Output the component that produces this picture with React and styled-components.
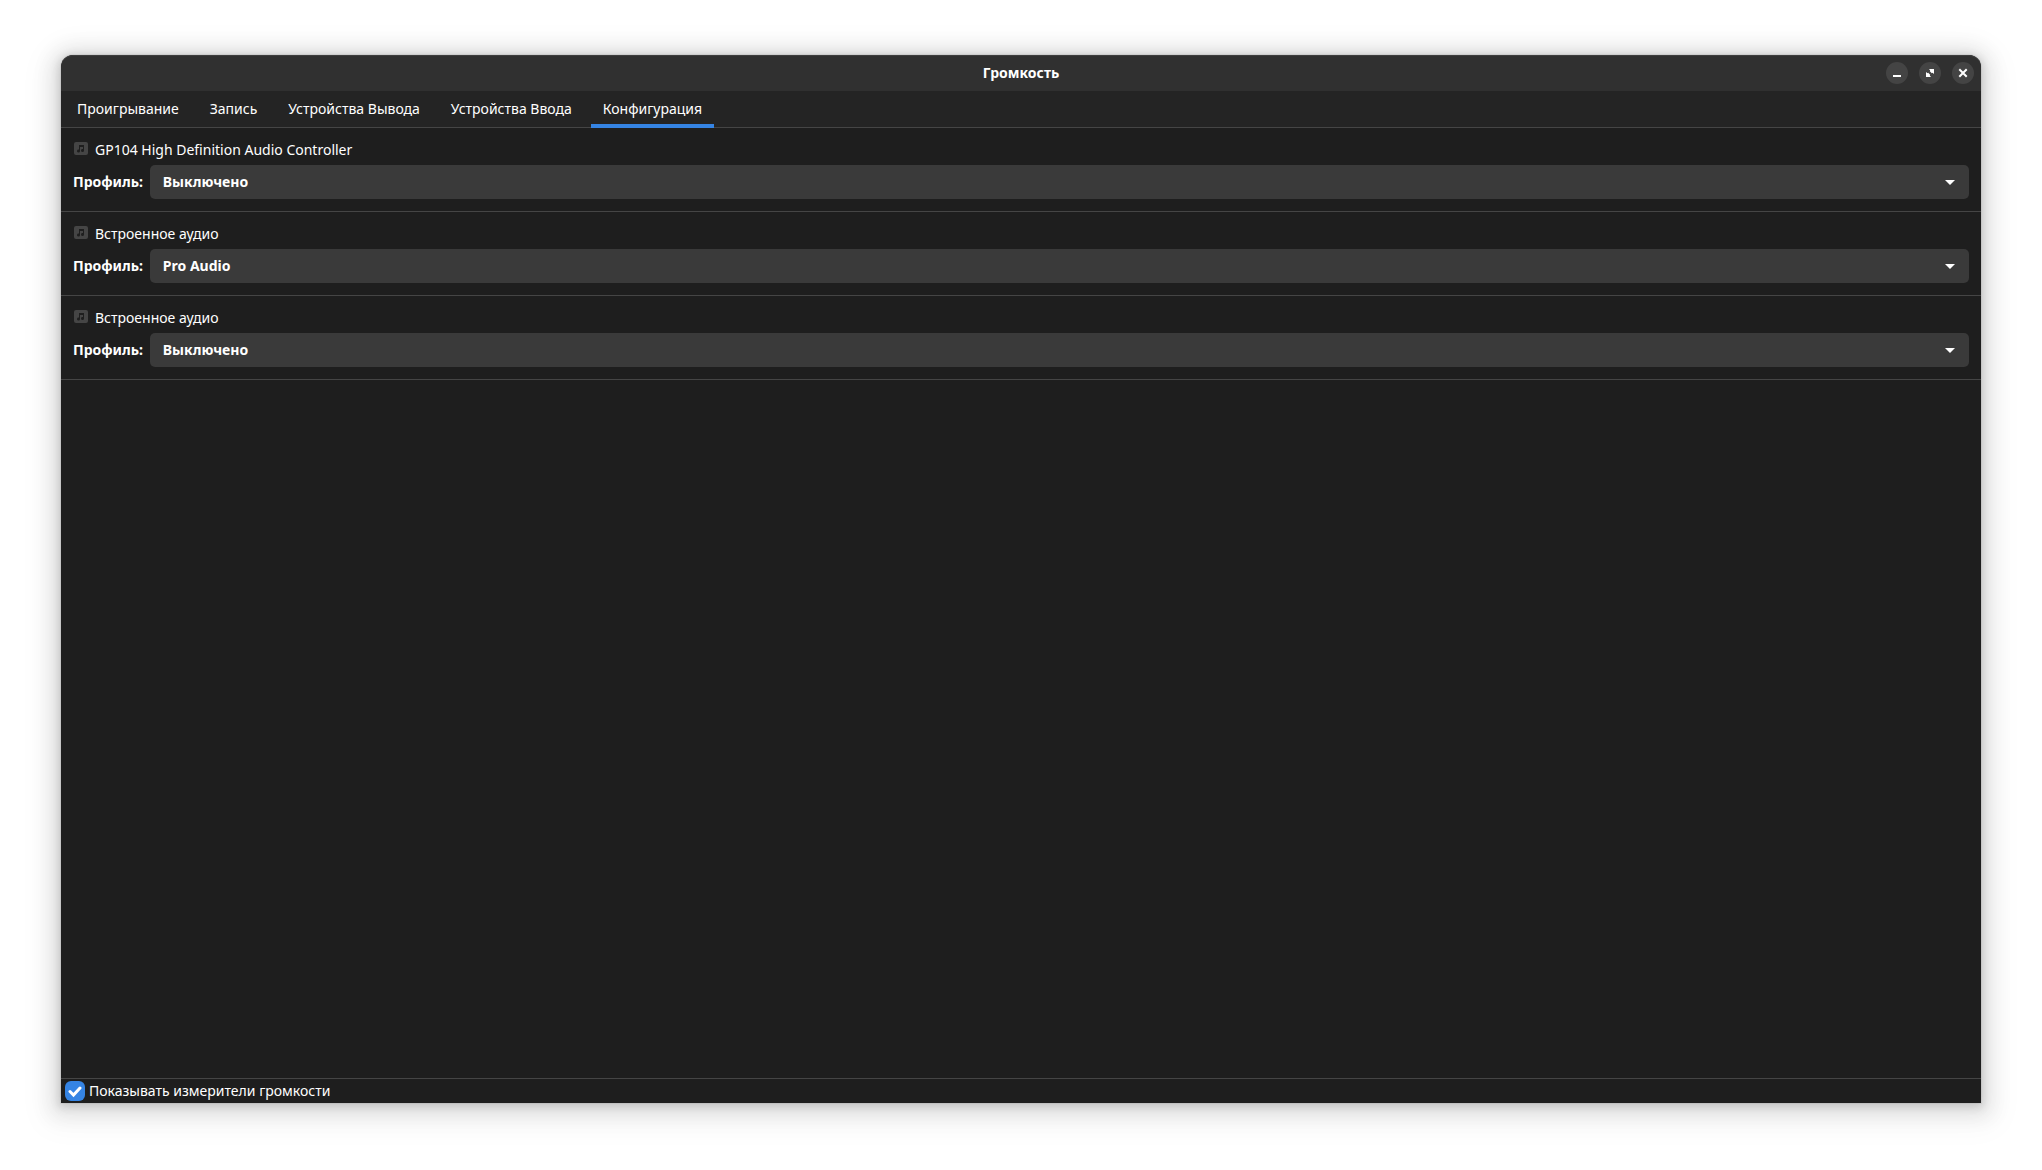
import styled, { createGlobalStyle } from "styled-components";
import { useState } from "react";

const GlobalStyle = createGlobalStyle`
    *{
        box-sizing: border-box;
    }
    body{
        margin: 0;
        background-color: white;
    }
    body, button, select, input{
        font-family: "Noto Sans", "Open Sans", sans-serif;
        font-size: 14px;
        line-height: 20px;
    }
`
const Desktop = styled.div`
    min-height: 100vh;
    display: flex;
    padding: 55px 61px 67px;
`
const Window = styled.main`
    flex: 1;
    display: flex;
    flex-direction: column;
    min-width: 0;
    color: white;
    background-color: #1e1e1e;
    border-radius: 12px 12px 0 0;
    box-shadow: 0 2px 8px 2px rgba(0,0,0,0.13), 0 3px 20px 10px rgba(0,0,0,0.09),
        0 6px 32px 16px rgba(0,0,0,0.04), 0 0 0 1px rgba(0,0,0,0.05);
`
const TitleBar = styled.header`
    height: 36px;
    display: grid;
    grid-template-columns: 1fr auto 1fr;
    align-items: center;
    padding: 0 7px;
    background-color: #303030;
    border-radius: 12px 12px 0 0;
    box-shadow: inset 0 1px rgba(255,255,255,0.07);
`
const Title = styled.h1`
    grid-column: 2;
    margin: 0;
    font-size: 14px;
    font-weight: 700;
`
const WindowButtons = styled.div`
    display: flex;
    justify-content: flex-end;
    gap: 11px;
`
const WindowButton = styled.button`
    width: 22px;
    height: 22px;
    padding: 0;
    border: none;
    border-radius: 50%;
    display: flex;
    align-items: center;
    justify-content: center;
    color: white;
    background-color: #444444;

    &:hover{
        background-color: #4f4f4f;
    }
`
const Tabs = styled.nav`
    height: 37px;
    display: flex;
    gap: 7px;
    padding: 0 4px;
    background-color: #242424;
    border-bottom: 1px solid #454545;
`
const Tab = styled.button`
    height: 37px;
    padding: 5px 12px 2px;
    border: none;
    border-bottom: 4px solid ${props => props.$active ? "#3584e4" : "transparent"};
    color: white;
    background: none;
`
const Devices = styled.section`
    flex: 1;
`
const Device = styled.article`
    padding: 12px;
    border-bottom: 1px solid #454545;
`
const DeviceName = styled.div`
    display: flex;
    gap: 7px;
    height: 19px;
    margin-bottom: 6px;
    padding-left: 1px;

    & > svg{
        margin-top: 2px;
    }
`
const Profile = styled.div`
    display: flex;
    align-items: center;
    gap: 7px;
    font-weight: 700;
`
const SelectBox = styled.div`
    flex: 1;
    display: grid;
    align-items: center;

    & > *{
        grid-area: 1 / 1;
    }
    & > svg{
        justify-self: end;
        margin-right: 14px;
        pointer-events: none;
    }
`
const Select = styled.select`
    appearance: none;
    width: 100%;
    height: 34px;
    padding: 0 36px 0 13px;
    border: none;
    border-radius: 5px;
    color: white;
    background-color: #3a3a3a;
    font-weight: 700;
`
const Footer = styled.footer`
    height: 25px;
    display: flex;
    align-items: flex-start;
    padding: 2px 4px;
    border-top: 1px solid #454545;
`
const CheckLabel = styled.label`
    display: flex;
    align-items: center;
    gap: 4px;
`
const CheckBox = styled.span`
    display: grid;
    place-items: center;

    & > *{
        grid-area: 1 / 1;
    }
    & > svg{
        pointer-events: none;
    }
`
const CheckInput = styled.input`
    appearance: none;
    width: 20px;
    height: 20px;
    margin: 0;
    border-radius: 6px;
    background-color: #454545;

    &:checked{
        background-color: #3584e4;
    }
`

const tabs = ["Проигрывание", "Запись", "Устройства Вывода", "Устройства Ввода", "Конфигурация"];

const devices = [
    { id: 1, name: "GP104 High Definition Audio Controller", profile: "Выключено" },
    { id: 2, name: "Встроенное аудио", profile: "Pro Audio" },
    { id: 3, name: "Встроенное аудио", profile: "Выключено" },
];

const CardIcon = () => (
    <svg width="14" height="13" viewBox="0 0 14 13" aria-hidden="true">
        <rect width="14" height="13" rx="2" fill="#454545" />
        <path d="M5 3h5v5.5a1.5 1.5 0 1 1-1-1.4V5H6v4a1.5 1.5 0 1 1-1-1.4z" fill="#1e1e1e" />
    </svg>
)

const DeviceRow = ({ item }) => {
    const [profile, setProfile] = useState(item.profile);
    const id = "profile-" + item.id;

    return (
        <Device>
            <DeviceName>
                <CardIcon />
                <span>{item.name}</span>
            </DeviceName>
            <Profile>
                <label htmlFor={id}>Профиль:</label>
                <SelectBox>
                    <Select id={id} value={profile} onChange={(e) => setProfile(e.target.value)}>
                        <option>Выключено</option>
                        <option>Pro Audio</option>
                    </Select>
                    <svg width="10" height="5" viewBox="0 0 10 5" aria-hidden="true">
                        <path d="M0 0h10L5 5z" fill="white" />
                    </svg>
                </SelectBox>
            </Profile>
        </Device>
    )
}

const App = () => {
    const [active, setActive] = useState("Конфигурация");
    const [meters, setMeters] = useState(true);

    return (
        <Desktop>
            <GlobalStyle />
            <Window>
                <TitleBar>
                    <Title>Громкость</Title>
                    <WindowButtons>
                        <WindowButton aria-label="Свернуть">
                            <svg width="10" height="10" viewBox="0 0 10 10">
                                <path d="M1 7h8v2H1z" fill="currentColor" />
                            </svg>
                        </WindowButton>
                        <WindowButton aria-label="Развернуть">
                            <svg width="10" height="10" viewBox="0 0 10 10">
                                <path d="M4 1h5v5L7.5 4.8 6.8 5.2 4.8 3.2 5.2 2.5zM1 4l1.5 1.2.7-.4 2 2-.4.7L6 9H1z" fill="currentColor" />
                            </svg>
                        </WindowButton>
                        <WindowButton aria-label="Закрыть">
                            <svg width="10" height="10" viewBox="0 0 10 10">
                                <path d="M2 2l6 6M8 2L2 8" stroke="currentColor" strokeWidth="2" strokeLinecap="square" />
                            </svg>
                        </WindowButton>
                    </WindowButtons>
                </TitleBar>
                <Tabs role="tablist">
                    {tabs.map((tab) => (
                        <Tab key={tab} role="tab" aria-selected={tab === active} $active={tab === active} onClick={() => setActive(tab)}>
                            {tab}
                        </Tab>
                    ))}
                </Tabs>
                <Devices>
                    {devices.map((item) => <DeviceRow key={item.id} item={item} />)}
                </Devices>
                <Footer>
                    <CheckLabel>
                        <CheckBox>
                            <CheckInput type="checkbox" checked={meters} onChange={() => setMeters(!meters)} />
                            {meters && (
                                <svg width="14" height="14" viewBox="0 0 14 14" aria-hidden="true">
                                    <path d="M2 7.5l3.5 3.5L12 4" fill="none" stroke="white" strokeWidth="3" strokeLinecap="round" />
                                </svg>
                            )}
                        </CheckBox>
                        Показывать измерители громкости
                    </CheckLabel>
                </Footer>
            </Window>
        </Desktop>
    )
}

export default App;
